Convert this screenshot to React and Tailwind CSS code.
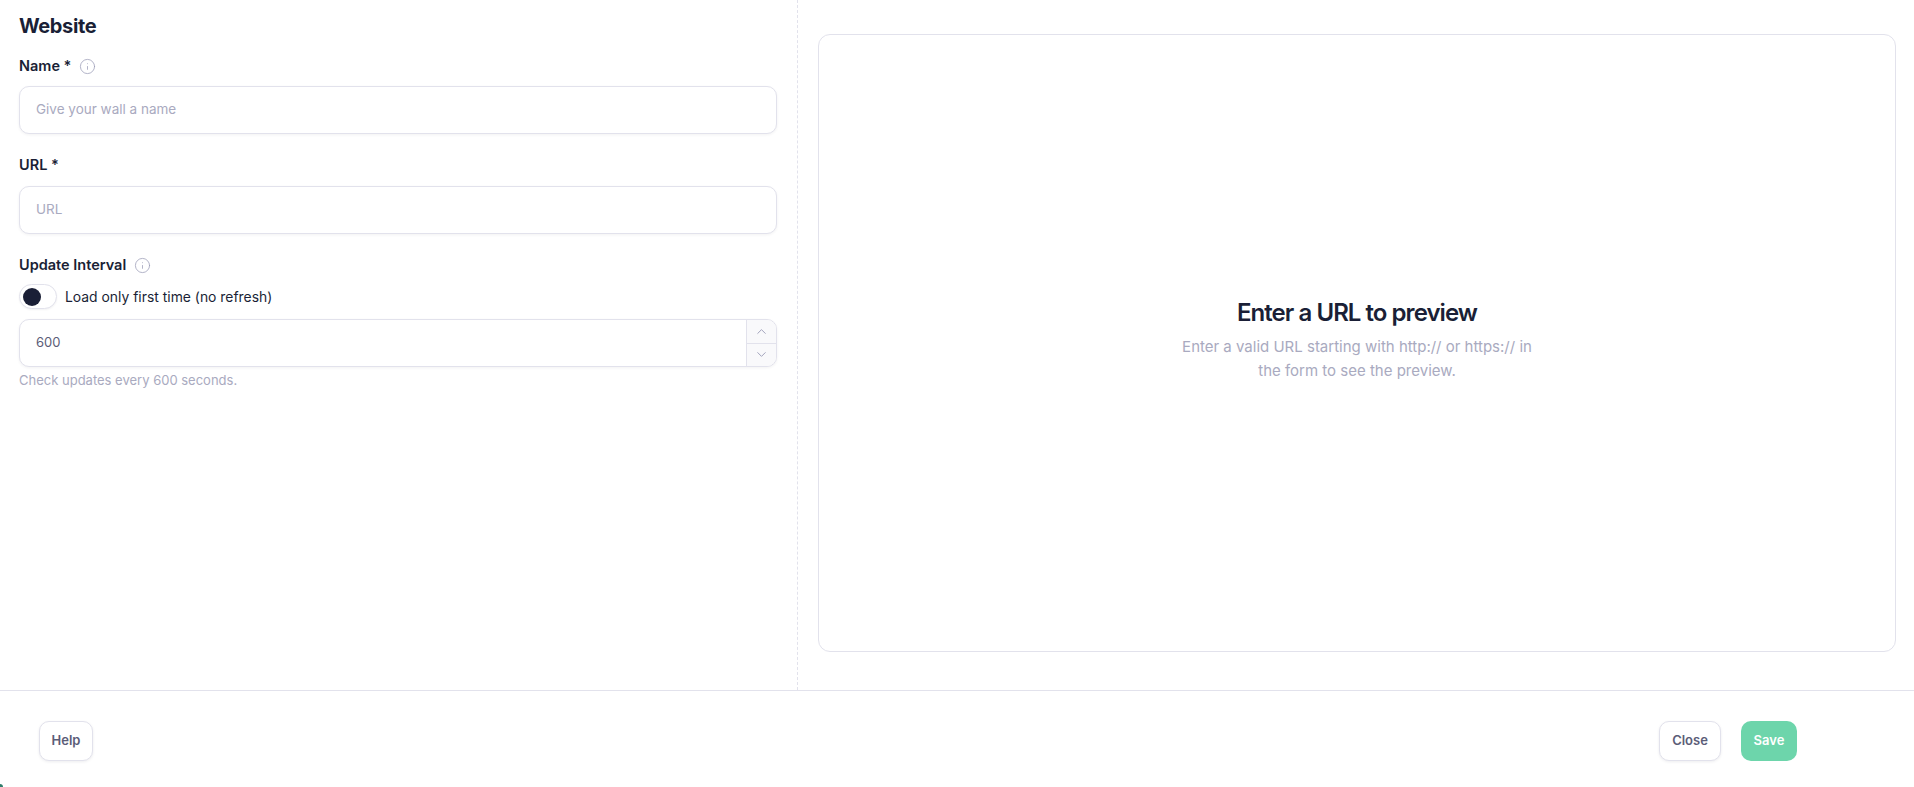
import { ChevronDown, ChevronUp, Info } from "lucide-react";

const inputClass =
  "block w-full h-[48px] rounded-[10px] border border-[#e2e2ec] bg-white px-[16px] pb-[3px] text-[13.5px] text-[#5b5d78] placeholder:text-[#a9aac0] shadow-[0_1px_3px_rgba(26,31,54,0.06)] outline-none";

function FieldLabel({ children, info }) {
  return (
    <div className="flex items-center gap-[8px] h-[20px]">
      <span className="text-[14.5px] leading-[20px] font-semibold text-[#1a1f36]">{children}</span>
      {info && <Info size={17} strokeWidth={1.1} className="text-[#9d9eb8]" />}
    </div>
  );
}

export default function App() {
  return (
    <div className="relative h-[787px] w-full flex flex-col bg-white font-['Inter',sans-serif] overflow-hidden">
      <div className="flex-1 flex min-h-0">
        <div className="w-[798px] shrink-0 border-r border-dashed border-[#e2e2ec] pl-[19px] pr-[20px]">
          <h2 className="mt-[12px] text-[20px] leading-[28px] font-bold tracking-[-0.4px] text-[#1a1f36]">Website</h2>

          <div className="mt-[16px]">
            <FieldLabel info>Name *</FieldLabel>
            <input className={`${inputClass} mt-[10px]`} placeholder="Give your wall a name" />
          </div>

          <div className="mt-[21px]">
            <FieldLabel>URL *</FieldLabel>
            <input className={`${inputClass} mt-[11px]`} placeholder="URL" />
          </div>

          <div className="mt-[21px]">
            <FieldLabel info>Update Interval</FieldLabel>
            <div className="mt-[9px] flex items-center gap-[8px] h-[25px]">
              <div className="w-[38px] h-[25px] rounded-full border border-[#e2e2ec] bg-white flex items-center pl-[3px] shadow-[0_1px_2px_rgba(26,31,54,0.06)]">
                <div className="w-[18px] h-[18px] rounded-full bg-[#1a1f36]" />
              </div>
              <span className="pt-[1px] text-[13.9px] text-[#1a1f36]">Load only first time (no refresh)</span>
            </div>
            <div className="mt-[10px] flex h-[48px] rounded-[10px] border border-[#e2e2ec] bg-white shadow-[0_1px_3px_rgba(26,31,54,0.06)] overflow-hidden">
              <div className="flex-1 flex items-center px-[16px] pb-[1px] text-[13px] text-[#5b5d78]">600</div>
              <div className="w-[30px] flex flex-col border-l border-[#e2e2ec] bg-[#f9f9fb]">
                <div className="flex-1 flex items-center justify-center border-b border-[#e2e2ec]">
                  <ChevronUp size={15} strokeWidth={1.5} className="text-[#9d9eb8]" />
                </div>
                <div className="flex-1 flex items-center justify-center">
                  <ChevronDown size={15} strokeWidth={1.5} className="text-[#9d9eb8]" />
                </div>
              </div>
            </div>
            <p className="mt-[3px] text-[13px] leading-[20px] text-[#a9aac0]">Check updates every 600 seconds.</p>
          </div>
        </div>

        <div className="flex-1 pl-[20px] pr-[18px] pt-[34px] pb-[38px]">
          <div className="h-full rounded-[12px] border border-[#e2e2ec] bg-white flex flex-col items-center justify-center text-center pb-[7px]">
            <h3 className="text-[24px] leading-[32px] font-semibold tracking-[-0.95px] text-[#1a1f36]">Enter a URL to preview</h3>
            <p className="mt-[6px] w-[360px] text-[15px] leading-[24px] text-[#a9aac0]">
              Enter a valid URL starting with http:// or https:// in the form to see the preview.
            </p>
          </div>
        </div>
      </div>

      <div className="h-[97px] shrink-0 border-t border-[#e2e2ec] flex items-start justify-between pl-[39px] pr-[117px] pt-[30px]">
        <button className="h-[40px] w-[54px] rounded-[10px] border border-[#e2e2ec] bg-white text-[13px] font-semibold text-[#5b5d78] shadow-[0_1px_3px_rgba(26,31,54,0.08)]">
          Help
        </button>
        <div className="flex gap-[20px]">
          <button className="h-[40px] w-[62px] rounded-[10px] border border-[#e2e2ec] bg-white text-[13px] font-semibold text-[#5b5d78] shadow-[0_1px_3px_rgba(26,31,54,0.08)]">
            Close
          </button>
          <button className="h-[40px] w-[56px] rounded-[10px] bg-[#6dd5ab] text-[13px] font-semibold text-white">
            Save
          </button>
        </div>
      </div>

      <div className="absolute left-0 bottom-0 w-[3px] h-[3px] bg-[#2f7d6b] rounded-tr-full" />
    </div>
  );
}
